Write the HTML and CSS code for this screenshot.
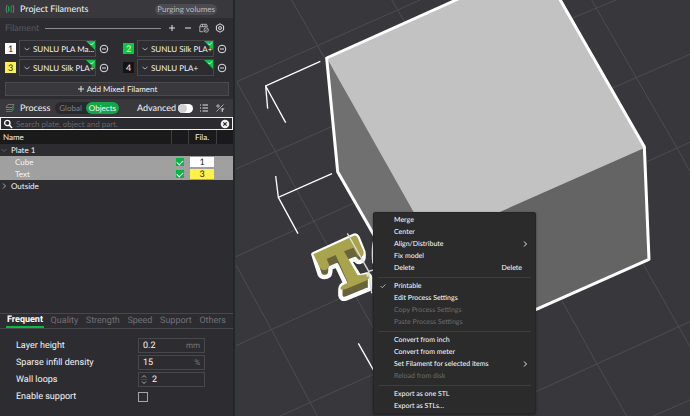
FILE: index.html
```html
<!DOCTYPE html>
<html lang="en">
<head>
<meta charset="utf-8">
<title>Project Filaments</title>
<link rel="stylesheet" href="styles.css">
</head>
<body>
<div class="app">
  <aside class="sidebar">
    <header class="bar">
      <svg class="icon" viewBox="0 0 10 10"><path d="M2 1Q.2 5 2 9M8 1Q9.800 5 8 9" fill="none" stroke="#77777c"/><path d="M3 2.500Q4.500 1 4.500 5T3 7.500Z" fill="#16a34a"/><path d="M5.500 1.500H7V8.500H5.500Z" fill="#16813f"/></svg>
      <h1 class="title">Project Filaments</h1>
      <button class="pill">Purging volumes</button>
    </header>

    <section class="filaments">
      <div class="legend">
        <span class="legend-text">Filament</span>
        <span class="rule"></span>
        <button class="tool" aria-label="Add filament"><svg class="icon" viewBox="0 0 10 10"><path d="M5 2V8M2 5H8" class="line"/></svg></button>
        <button class="tool" aria-label="Remove filament"><svg class="icon" viewBox="0 0 10 10"><path d="M2 5H8" class="line"/></svg></button>
        <button class="tool" aria-label="Sync filaments"><svg class="icon" viewBox="0 0 10 10"><path d="M4.500 8.700H.8V3.500L2 1.300H7.500L8.500 3.500M.8 3.700H8.500M3.500 1.300V3.700M6 1.300V3.700" class="thin"/><circle cx="7.200" cy="7" r="2.200" class="thin"/><path d="M6.200 7L7 7.700L8.300 6.300" class="thin"/></svg></button>
        <button class="tool" aria-label="Filament settings"><svg class="icon" viewBox="0 0 10 10"><path d="M5 .8L8.600 2.900V7.100L5 9.200L1.400 7.100V2.900Z" class="line"/><circle cx="5" cy="5" r="1.500" class="line"/></svg></button>
      </div>
      <div class="slots">
        <div class="slot"><span class="swatch white">1</span><label class="pick"><svg class="chev" viewBox="0 0 6 6"><path d="M.5 2L3 4L5.500 2" class="thin"/></svg><select aria-label="Filament 1"><option>SUNLU PLA Ma...</option></select><svg class="corner" viewBox="0 0 9 9"><path d="M0 0H9V9Z" fill="#09c34a"/><path d="M4 2.500L5.500 4L8 1.500" fill="none" stroke="#fff" stroke-width=".8"/></svg></label><button class="tool" aria-label="Edit filament 1"><svg class="icon" viewBox="0 0 10 10"><circle cx="5" cy="5" r="3.800" class="line"/><path d="M3 5H7" class="line"/></svg></button></div>
        <div class="slot"><span class="swatch green">2</span><label class="pick"><svg class="chev" viewBox="0 0 6 6"><path d="M.5 2L3 4L5.500 2" class="thin"/></svg><select aria-label="Filament 2"><option>SUNLU Silk PLA+</option></select><svg class="corner" viewBox="0 0 9 9"><path d="M0 0H9V9Z" fill="#09c34a"/><path d="M4 2.500L5.500 4L8 1.500" fill="none" stroke="#fff" stroke-width=".8"/></svg></label><button class="tool" aria-label="Edit filament 2"><svg class="icon" viewBox="0 0 10 10"><circle cx="5" cy="5" r="3.800" class="line"/><path d="M3 5H7" class="line"/></svg></button></div>
        <div class="slot"><span class="swatch yellow">3</span><label class="pick"><svg class="chev" viewBox="0 0 6 6"><path d="M.5 2L3 4L5.500 2" class="thin"/></svg><select aria-label="Filament 3"><option>SUNLU Silk PLA+</option></select><svg class="corner" viewBox="0 0 9 9"><path d="M0 0H9V9Z" fill="#09c34a"/><path d="M4 2.500L5.500 4L8 1.500" fill="none" stroke="#fff" stroke-width=".8"/></svg></label><button class="tool" aria-label="Edit filament 3"><svg class="icon" viewBox="0 0 10 10"><circle cx="5" cy="5" r="3.800" class="line"/><path d="M3 5H7" class="line"/></svg></button></div>
        <div class="slot"><span class="swatch black">4</span><label class="pick"><svg class="chev" viewBox="0 0 6 6"><path d="M.5 2L3 4L5.500 2" class="thin"/></svg><select aria-label="Filament 4"><option>SUNLU PLA+</option></select><svg class="corner" viewBox="0 0 9 9"><path d="M0 0H9V9Z" fill="#09c34a"/><path d="M4 2.500L5.500 4L8 1.500" fill="none" stroke="#fff" stroke-width=".8"/></svg></label><button class="tool" aria-label="Edit filament 4"><svg class="icon" viewBox="0 0 10 10"><circle cx="5" cy="5" r="3.800" class="line"/><path d="M3 5H7" class="line"/></svg></button></div>
      </div>
      <button class="mixed"><svg class="plus" viewBox="0 0 8 8"><path d="M4 1V7M1 4H7" class="line"/></svg>Add Mixed Filament</button>
    </section>

    <div class="bar">
      <svg class="icon" viewBox="0 0 10 10"><path d="M1 4.500L3 1.500H9L7 4.500ZM1 6.500H7L9 3.500" fill="none" stroke="#85858a" stroke-width=".8"/><path d="M1 8.500H7L9 5.500" fill="none" stroke="#16a34a"/></svg>
      <h2 class="title">Process</h2>
      <div class="scope"><button class="scope-item">Global</button><button class="scope-item chosen">Objects</button></div>
      <label class="advanced">Advanced<input type="checkbox" class="switch"></label>
      <button class="tool" aria-label="Object list"><svg class="icon" viewBox="0 0 10 10"><path d="M3.500 2H9M3.500 5H9M3.500 8H9M1 2H2M1 5H2M1 8H2" class="line"/></svg></button>
      <button class="tool" aria-label="Compare presets"><svg class="icon" viewBox="0 0 10 10"><path d="M1.500 8.500L8.500 1.500M1 3H5M3 1V5M5.500 6H9M7.500 5V9M6 8.500L9 5.500" class="thin"/></svg></button>
    </div>

    <label class="search">
      <svg class="icon" viewBox="0 0 10 10"><circle cx="4.300" cy="4" r="2.700" fill="none" stroke="#fff" stroke-width="1.300"/><path d="M6.300 6L9 9" stroke="#fff" stroke-width="1.600"/></svg>
      <input type="text" placeholder="Search plate, object and part." aria-label="Search">
      <button class="tool" aria-label="Clear search"><svg class="icon" viewBox="0 0 10 10"><circle cx="5" cy="5" r="4.300" fill="#f2f2f2"/><path d="M3.300 3.300L6.700 6.700M6.700 3.300L3.300 6.700" stroke="#222" stroke-width="1.100"/></svg></button>
    </label>

    <div class="objects">
      <table>
        <thead><tr><th class="name">Name</th><th class="on"></th><th class="fila">Fila.</th><th></th></tr></thead>
        <tbody>
          <tr><td><span class="node"><svg class="chev dim" viewBox="0 0 6 6"><path d="M.5 2L3 4.500L5.500 2" class="thin"/></svg>Plate 1</span></td><td></td><td></td><td></td></tr>
          <tr class="selected"><td><span class="leaf">Cube</span></td><td><input type="checkbox" class="tick" aria-label="Print Cube" checked></td><td><span class="chip">1</span></td><td></td></tr>
          <tr class="selected"><td><span class="leaf">Text</span></td><td><input type="checkbox" class="tick" aria-label="Print Text" checked></td><td><span class="chip yellow">3</span></td><td></td></tr>
          <tr><td><span class="node"><svg class="chev" viewBox="0 0 6 6"><path d="M2 .5L4.500 3L2 5.500" class="thin"/></svg>Outside</span></td><td></td><td></td><td></td></tr>
        </tbody>
      </table>
    </div>

    <nav class="tabs">
      <button class="tab current">Frequent</button><button class="tab">Quality</button><button class="tab">Strength</button><button class="tab">Speed</button><button class="tab">Support</button><button class="tab">Others</button>
    </nav>
    <section class="params">
      <div class="param"><label for="layer">Layer height</label><span class="field"><input id="layer" type="text" value="0.2"><span class="unit">mm</span></span></div>
      <div class="param"><label for="infill">Sparse infill density</label><span class="field"><input id="infill" type="text" value="15"><span class="unit">%</span></span></div>
      <div class="param"><label for="walls">Wall loops</label><span class="field spin"><svg class="steps" viewBox="0 0 6 11"><path d="M1 3.500L3 1.500L5 3.500M1 7.500L3 9.500L5 7.500" class="thin"/><path d="M0 5.500H6" stroke="#55555a" stroke-width=".6"/></svg><input id="walls" type="text" value="2"></span></div>
      <div class="param"><label for="support">Enable support</label><input id="support" type="checkbox" class="box"></div>
    </section>
  </aside>

  <main class="view">
    <svg class="scene" viewBox="0 0 1365 1248" preserveAspectRatio="xMinYMin slice">
      <g fill="none" stroke="#4d4c52" stroke-width="3">
        <path d="M5 245L418 990M170 0L295 220M470 0L512 70M3 795L110 990L247 1248M1070 0L1205 235L1327 445L1365 515M980 900L1085 1090L1175 1248M1222 788L1365 1040"/>
        <path d="M5 245L245 138L555 0M3 507L290 380M3 770L355 610M3 1037L415 850M135 1248L415 1123M1010 55L1143 0M1130 265L1365 163M1235 485L1365 427M903 1175L1365 965M1255 1248L1365 1200"/>
      </g>
      <path d="M275 173L664 0H980L1228 440L1242 778L870 943Q420 730 420 705L308 515Z" fill="#c2c2c2"/>
      <path d="M275 173L600 750L420 705L308 515Z" fill="#707070"/>
      <path d="M803 632L1228 444L1242 778L870 943L780 643Z" fill="#646464"/>
      <path d="M670 -3L275 174L308 515L430 728M974 -3L1228 440L1242 778L870 943" fill="none" stroke="#fff" stroke-width="9" stroke-linejoin="round"/>
      <path d="M256 184L92 258L98 326M92 258L152 368M122 528L130 592L291 521M130 592L189 701M370 1030L418 1115" fill="none" stroke="#fff" stroke-width="4"/>
      <path d="M418 718Q410 740 414 790" fill="none" stroke="#fff" stroke-width="5"/>
      <g transform="translate(195 660)">
        <path d="M40 103L160 48Q168 44 173 53L190 95Q194 121 184 124Q173 130 165 117L149 123L178 169L201 163Q212 164 210 179V206L137 236Q123 239 121 226V207Q122 195 136 190L110 136L91 144Q93 165 83 169Q66 175 59 163Z" fill="#69643a" stroke="#fff" stroke-width="13" stroke-linejoin="round"/>
        <path d="M40 103L160 48Q168 44 173 53L190 93Q193 108 184 110Q175 112 171 103L160 83L132 94L173 166L201 163Q213 170 203 180L136 208Q124 211 121 206Q121 196 144 188L107 105L80 117L87 133Q88 146 75 150Q65 153 59 142Z" fill="#aaa34d"/>
        <path d="M142 40L206 154L215 220M220 150L206 154L201 170" fill="none" stroke="#ddd" stroke-width="4"/>
      </g>
    </svg>

    <div class="menu" role="menu">
      <button class="item" role="menuitem"><span>Merge</span></button>
      <button class="item" role="menuitem"><span>Center</span></button>
      <button class="item" role="menuitem"><span>Align/Distribute</span><svg class="chev" viewBox="0 0 6 6"><path d="M2 .5L4.500 3L2 5.500" class="line"/></svg></button>
      <button class="item" role="menuitem"><span>Fix model</span></button>
      <button class="item" role="menuitem"><span>Delete</span><span class="key">Delete</span></button>
      <hr>
      <button class="item" role="menuitemcheckbox" aria-checked="true"><svg class="mark" viewBox="0 0 6 6"><path d="M.5 3L2.200 4.700L5.500 1.500" class="thin"/></svg><span>Printable</span></button>
      <button class="item" role="menuitem"><span>Edit Process Settings</span></button>
      <button class="item" role="menuitem" disabled><span>Copy Process Settings</span></button>
      <button class="item" role="menuitem" disabled><span>Paste Process Settings</span></button>
      <hr>
      <button class="item" role="menuitem"><span>Convert from inch</span></button>
      <button class="item" role="menuitem"><span>Convert from meter</span></button>
      <button class="item" role="menuitem"><span>Set Filament for selected items</span><svg class="chev" viewBox="0 0 6 6"><path d="M2 .5L4.500 3L2 5.500" class="line"/></svg></button>
      <button class="item" role="menuitem" disabled><span>Reload from disk</span></button>
      <hr>
      <button class="item" role="menuitem"><span>Export as one STL</span></button>
      <button class="item" role="menuitem"><span>Export as STLs...</span></button>
    </div>
  </main>
</div>
</body>
</html>
```

FILE: styles.css
```css
* { box-sizing: border-box; }
body { margin: 0; background: #2d2d31; color: #f4f4f5; font: 8px/12px Lato, "Noto Sans", sans-serif; text-rendering: geometricPrecision; }
button, input, select { margin: 0; padding: 0; border: 0; background: none; color: inherit; font: inherit; text-rendering: inherit; }
input, select { min-width: 0; outline: 0; }
svg { display: block; flex: none; }
.line { fill: none; stroke: #e4e4e6; stroke-width: 1; }
.thin { fill: none; stroke: #c8c8cc; stroke-width: .8; }
.app { display: flex; min-height: 100vh; }
.sidebar { display: flex; flex: none; flex-direction: column; width: 235px; border-right: 2px solid #20282c; background: #2d2d31; }
.icon { width: 10px; height: 10px; }
.chev { width: 6px; height: 6px; }
.dim { opacity: .4; }
.tool { flex: none; width: 10px; height: 10px; }

.bar { display: flex; align-items: center; height: 18px; padding: 0 8px 0 5px; background: #38383d; }
.title { margin: 0 0 0 5px; font-size: 9px; font-weight: 400; }
.pill { margin-left: auto; margin-right: 8px; height: 11px; padding: 0 2px; border-radius: 6px; background: #4b4b51; color: #b9b9bd; font-size: 7px; line-height: 11px; }

.filaments { padding: 4px 4px 3px 5px; }
.legend { display: flex; align-items: center; gap: 6px; height: 12px; padding-right: 4px; color: #58585d; font-size: 9px; }
.rule { flex: 1; height: 1px; background: #8c8c90; }
.slots { display: grid; grid-template-columns: 1fr 1fr; gap: 2px 14px; padding: 6px 4px 6px 0; }
.slot { display: flex; align-items: center; gap: 3px; }
.swatch { width: 11px; height: 11px; font-size: 9px; line-height: 11px; text-align: center; }
.white { background: #fff; color: #111; }
.green { background: #0dc63f; }
.yellow { background: #fff04a; color: #222; }
.black { background: #141414; }
.pick { position: relative; display: flex; flex: 1; align-items: center; gap: 3px; min-width: 0; height: 17px; padding-left: 4px; border: 1px solid #47474c; }
.pick select { flex: 1; appearance: none; }
.corner { position: absolute; top: 0; right: 0; width: 9px; height: 9px; }
.mixed { display: flex; align-items: center; justify-content: center; gap: 2px; width: 100%; height: 14px; border: 1px solid #4a4a4f; background: #38383d; }
.plus { width: 8px; height: 8px; }

.pill { font-size: 8px; }
.scope { display: flex; margin-left: 5px; border-radius: 6px; background: #29292d; }
.scope-item { height: 12px; padding: 0 4px; border-radius: 6px; color: #808086; line-height: 12px; }
.scope-item.chosen { padding: 0 3px; background: #16a34a; color: #f4fff7; }
.advanced { display: flex; align-items: center; gap: 2px; margin-left: auto; font-size: 9px; }
.bar .tool { margin-left: 6px; }
.switch { position: relative; width: 15px; height: 9px; margin: 0; border-radius: 5px; background: #fff; appearance: none; }
.switch::before { content: ""; display: block; width: 9px; height: 9px; border-radius: 5px; background: #d0d0d3; }

.search { display: flex; align-items: center; gap: 3px; height: 13px; padding: 0 2px; border: 1px solid #f2f2f2; background: #2b2b2f; }
.search input { flex: 1; }
.search input::placeholder { color: #66666b; opacity: 1; }

.objects { flex: 1; }
table { width: 100%; border-collapse: collapse; table-layout: fixed; }
th { height: 14px; padding: 0 3px; border-right: 1px solid #404044; background: #1a1a1b; font-weight: 400; text-align: left; }
th:last-child { border-right: 0; width: 17px; }
.on { width: 17px; }
.fila { width: 28px; text-align: center; }
td { height: 12px; padding: 0; }
.node { display: flex; align-items: center; gap: 4px; padding-left: 1px; }
.leaf { display: block; padding-left: 15px; }
.selected { background: #a0a0a0; }
.tick { position: relative; display: block; width: 8px; height: 8px; margin-left: 5px; background: #0bb544; appearance: none; }
.tick::before { content: ""; display: block; width: 5px; height: 3px; margin: 2px; border: solid #fff; border-width: 0 0 1px 1px; transform: translate(-1px) rotate(-45deg); }
.chip { display: block; height: 10px; margin: 0 2px; background: #fff; color: #222; font-size: 9px; line-height: 10px; text-align: center; }
.chip.yellow { background: #fff04a; }

.tabs, .params { font-family: Roboto, "Noto Sans", sans-serif; font-size: 9px; }
.tabs { display: flex; justify-content: space-between; padding: 0 6px; border: solid #48484c; border-width: 1px 0; }
.tab { height: 14px; padding: 0 1px; border-bottom: 1px solid transparent; color: #707076; line-height: 12px; }
.tab.current { border-bottom: 2px solid #09b943; color: #fff; font-weight: 700; }
.params { display: grid; gap: 2px; padding: 9px 28px 12px 16px; }
.param { display: grid; grid-template-columns: 122px 1fr; align-items: center; height: 15px; }
.field { display: flex; align-items: center; height: 15px; padding: 0 4px; border: 1px solid #47474c; }
.field input { flex: 1; width: 20px; }
.spin { gap: 5px; padding-left: 2px; }
.steps { width: 6px; height: 11px; }
.unit { color: #77777c; font-size: 8px; }
.box { width: 10px; height: 10px; border: 1px solid #a5a5a9; appearance: none; }

.view { position: relative; flex: 1; min-width: 0; overflow: hidden; background: #38373c; }
.scene { position: absolute; inset: 0; width: 100%; height: 100%; }
.menu { position: absolute; top: 212px; left: 138px; width: 163px; padding: 1px 0; border: 1px solid #252525; border-radius: 2px; background: #2b2b2b; box-shadow: 0 1px 3px #0006; color: #fff; font-size: 7px; }
.item { position: relative; display: flex; align-items: center; justify-content: space-between; width: 100%; height: 12px; padding: 0 13px 0 20px; line-height: 12px; text-align: left; }
.item .chev { margin-right: -6px; }
.item:disabled { color: #6b6b6b; }
.mark { position: absolute; left: 6px; width: 6px; height: 6px; }
.menu hr { height: 1px; margin: 3px 4px 2px; border: 0; background: #3d3d3d; }
```
